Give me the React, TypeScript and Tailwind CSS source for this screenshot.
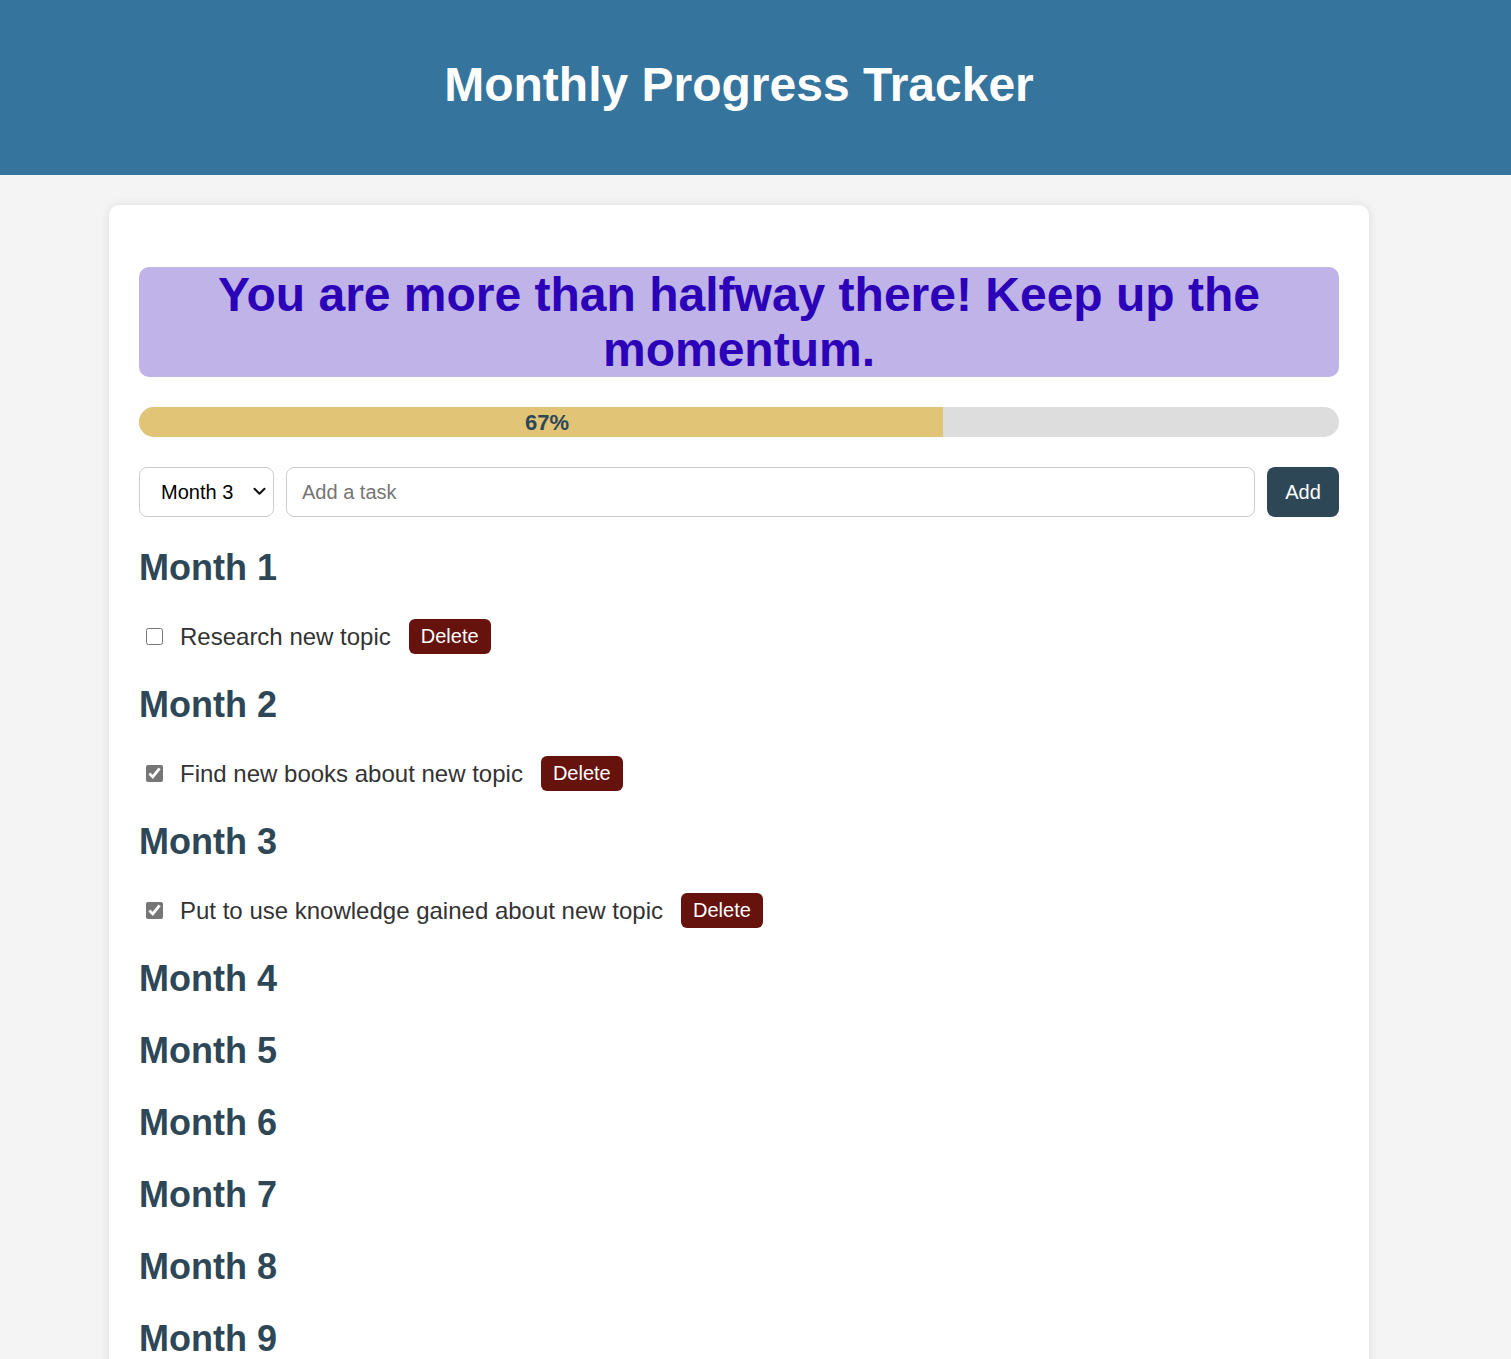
import { useState } from "react";

type Task = { id: number; month: number; text: string; done: boolean };

const months = Array.from({ length: 12 }, (_, i) => i + 1);

export default function App() {
  const [tasks, setTasks] = useState<Task[]>([
    { id: 1, month: 1, text: "Research new topic", done: false },
    { id: 2, month: 2, text: "Find new books about new topic", done: true },
    { id: 3, month: 3, text: "Put to use knowledge gained about new topic", done: true },
  ]);
  const [month, setMonth] = useState(3);
  const [text, setText] = useState("");

  const doneCount = tasks.filter((t) => t.done).length;
  const pct = tasks.length ? Math.round((doneCount / tasks.length) * 100) : 0;

  const addTask = () => {
    if (!text.trim()) return;
    setTasks([...tasks, { id: Date.now(), month, text: text.trim(), done: false }]);
    setText("");
  };

  return (
    <div className="min-h-screen bg-[#f4f4f4] font-['Liberation_Sans',Arial,sans-serif]">
      <header className="h-[175px] bg-[#35749d] flex items-center justify-center pr-[33px]">
        <h1 className="text-[48px] font-bold text-white leading-none -mt-[5px]">Monthly Progress Tracker</h1>
      </header>

      <main className="ml-[109px] mt-[30px] w-[1260px] bg-white rounded-[10px] shadow-[0_0_10px_rgba(0,0,0,0.1)] px-[30px] pt-[62px] pb-[30px]">
        <div className="bg-[#bfb3e8] rounded-[10px] text-center text-[48px] font-bold text-[#2c02b8] leading-[55px]">
          You are more than halfway there! Keep up the momentum.
        </div>

        <div className="mt-[30px] h-[30px] rounded-full bg-[#dddddd] overflow-hidden">
          <div
            className="h-full bg-[#e2c477] flex items-center justify-center text-[22px] font-bold text-[#2e4756]"
            style={{ width: `${pct}%` }}
          >
            <span className="pl-[12px]">{pct}%</span>
          </div>
        </div>

        <div className="mt-[30px] flex gap-[12px] h-[50px]">
          <div className="relative w-[135px] h-full">
            <select
              value={month}
              onChange={(e) => setMonth(Number(e.target.value))}
              className="appearance-none w-full h-full border border-[#cccccc] rounded-[8px] bg-white pl-[21px] pr-[8px] text-[20px] text-black"
            >
              {months.map((m) => (
                <option key={m} value={m}>
                  Month {m}
                </option>
              ))}
            </select>
            <svg
              className="pointer-events-none absolute left-[114px] top-[20px]"
              width="13"
              height="9"
              viewBox="0 0 13 9"
              fill="none"
            >
              <path d="M1.5 1.8 L6.5 6.8 L11.5 1.8" stroke="#111" strokeWidth="2" strokeLinecap="round" strokeLinejoin="round" />
            </svg>
          </div>
          <input
            value={text}
            onChange={(e) => setText(e.target.value)}
            placeholder="Add a task"
            className="flex-1 h-full border border-[#cccccc] rounded-[8px] px-[15px] text-[20px] placeholder:text-[#757575] outline-none"
          />
          <button
            onClick={addTask}
            className="w-[72px] h-full rounded-[8px] bg-[#2e4756] text-white text-[20px]"
          >
            Add
          </button>
        </div>

        <div className="mt-[15px]">
          {months.map((m) => (
            <section key={m}>
              <h2 className="h-[72px] flex items-center text-[36px] font-bold text-[#2e4756]">Month {m}</h2>
              {tasks
                .filter((t) => t.month === m)
                .map((t) => (
                  <div key={t.id} className="h-[65px] flex items-center">
                    <input
                      type="checkbox"
                      checked={t.done}
                      onChange={() =>
                        setTasks(tasks.map((x) => (x.id === t.id ? { ...x, done: !x.done } : x)))
                      }
                      className="ml-[7px] w-[17px] h-[17px] accent-[#767676]"
                    />
                    <span className="ml-[17px] text-[24px] text-[#333333]">{t.text}</span>
                    <button
                      onClick={() => setTasks(tasks.filter((x) => x.id !== t.id))}
                      className="ml-[18px] h-[35px] px-[12px] rounded-[6px] bg-[#66120d] text-white text-[20px] -mt-[1px]"
                    >
                      Delete
                    </button>
                  </div>
                ))}
            </section>
          ))}
        </div>
      </main>
    </div>
  );
}
